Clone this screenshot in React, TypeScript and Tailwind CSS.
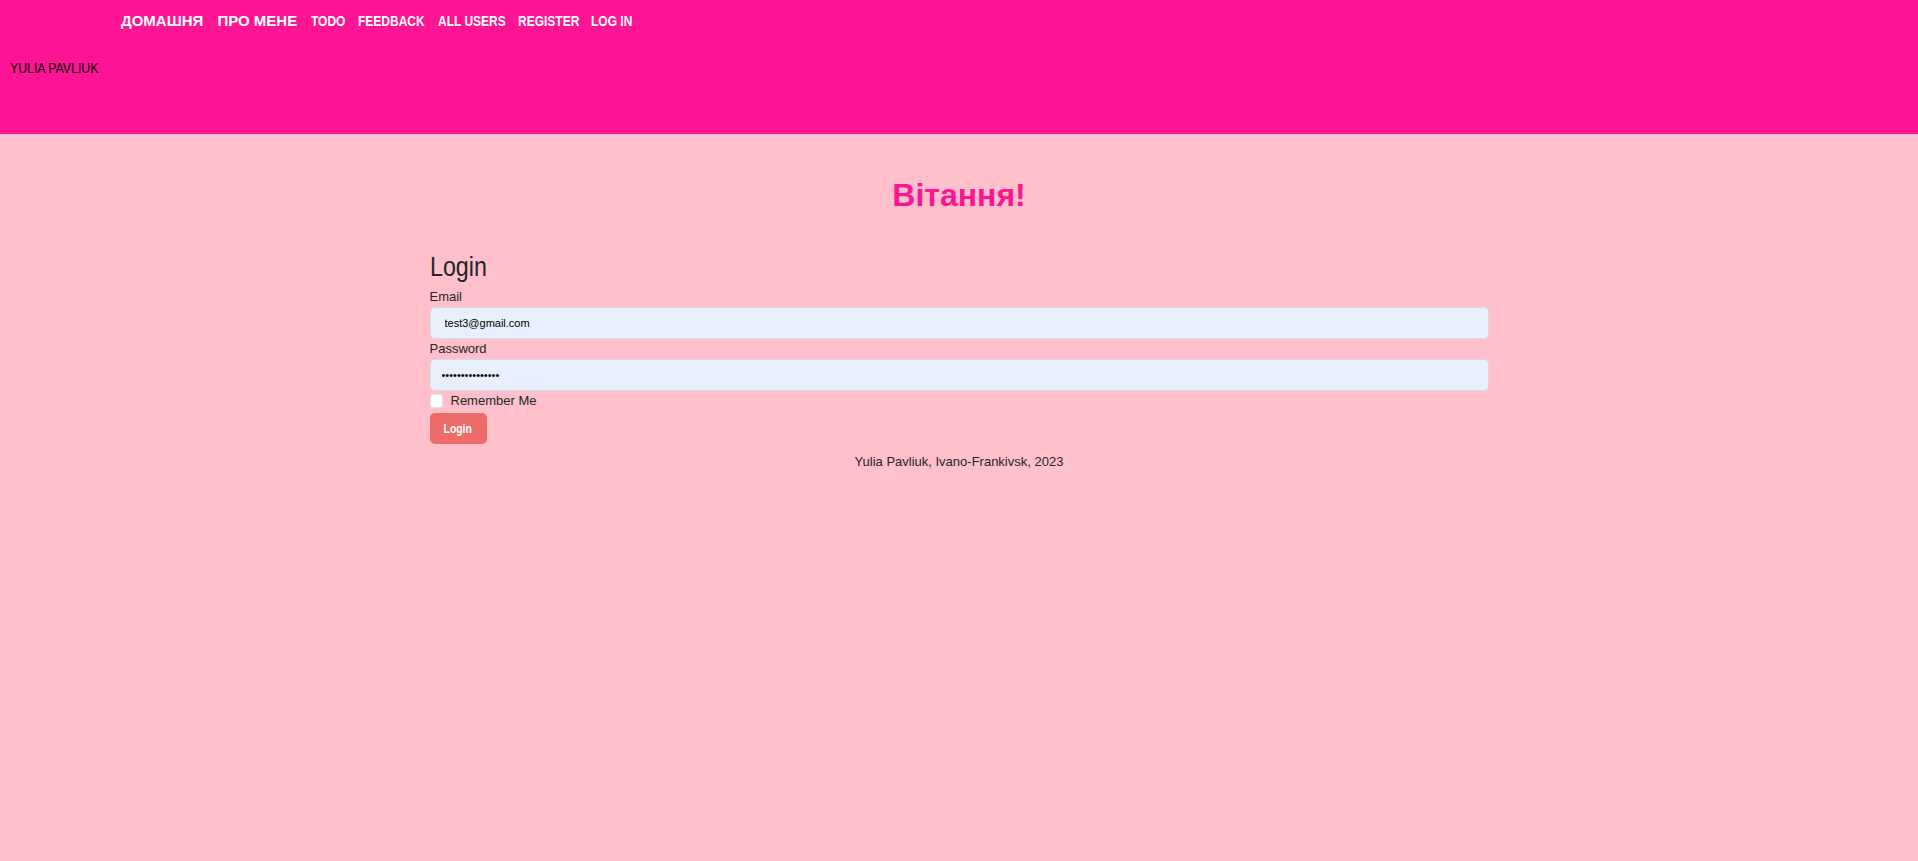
// Latin labels in the reference use a narrow face (Arial Narrow); none is installed,
// so those are Liberation Sans squeezed to 80% inside a box of the measured width.
const navItems = [
  { label: "ДОМАШНЯ", box: "", inner: "" },
  { label: "ПРО МЕНЕ", box: "", inner: "" },
  { label: "TODO", box: "w-[33px]", inner: "inline-block origin-left scale-x-[0.8]" },
  { label: "FEEDBACK", box: "w-[66px]", inner: "inline-block origin-left scale-x-[0.8]" },
  { label: "ALL USERS", box: "w-[66px]", inner: "inline-block origin-left scale-x-[0.8]" },
  { label: "REGISTER", box: "w-[59px]", inner: "inline-block origin-left scale-x-[0.8]" },
  { label: "LOG IN", box: "w-[41px]", inner: "inline-block origin-left scale-x-[0.8]" },
];

export default function App() {
  return (
    <div className="min-h-[861px] bg-[#ffc0cb] font-['Liberation_Sans',Arial,sans-serif] text-[#212529]">
      {/* Header */}
      <header className="h-[134px] bg-[#ff1493]">
        <nav className="flex gap-[14px] pl-[121px] pt-[11px] text-[15px] font-bold leading-[20px] text-white">
          {navItems.map((item) => (
            <a key={item.label} href="#" className={`block whitespace-nowrap ${item.box}`}>
              <span className={item.inner}>{item.label}</span>
            </a>
          ))}
        </nav>
        <div className="mt-[27px] w-[100px] pl-[10px] text-[15px] leading-[20px] text-black">
          <span className="inline-block origin-left scale-x-[0.82] whitespace-nowrap">YULIA PAVLIUK</span>
        </div>
      </header>

      <main>
        <h1 className="mt-[41px] text-center text-[32px] font-bold leading-[40px] text-[#ff1493]">
          Вітання!
        </h1>

        <div className="mx-auto mt-[36px] w-[1059px]">
          <h2 className="text-[27px] leading-[32px] text-[#212529]">
            <span className="inline-block origin-left scale-x-[0.86]">Login</span>
          </h2>
          <form className="mt-[4px]">
            <label className="block text-[13px] leading-[20px]">Email</label>
            <input
              type="email"
              readOnly
              value="test3@gmail.com"
              className="block h-[32px] w-full rounded-[5px] border border-[#d6dce6] bg-[#e8f0fe] pl-[14px] text-[11px] text-black outline-none"
            />
            <label className="block text-[13px] leading-[20px]">Password</label>
            <input
              type="password"
              readOnly
              value="passwordpasswor"
              className="block h-[32px] w-full rounded-[5px] border border-[#d6dce6] bg-[#e8f0fe] pl-[11px] text-[11px] text-black outline-none"
            />
            <div className="flex h-[20px] items-center gap-[8px]">
              <input
                type="checkbox"
                className="h-[14px] w-[13px] appearance-none rounded-[3px] border border-[#e2e2e2] bg-white"
              />
              <span className="text-[13px] leading-[20px]">Remember Me</span>
            </div>
            <button
              type="button"
              className="mt-[2px] flex h-[31px] w-[57px] items-center justify-center rounded-[5px] bg-[#ed6b68] text-[13px] font-bold text-white"
            >
              <span className="inline-block scale-x-[0.8]">Login</span>
            </button>
          </form>
        </div>

        <footer className="mt-[8px] text-center text-[13px] leading-[20px] text-[#212529]">
          Yulia Pavliuk, Ivano-Frankivsk, 2023
        </footer>
      </main>
    </div>
  );
}
